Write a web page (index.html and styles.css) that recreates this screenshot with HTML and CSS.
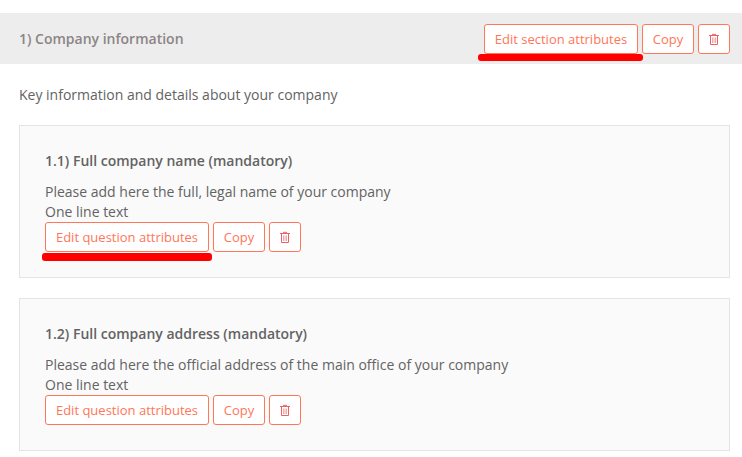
FILE: index.html
```
<!DOCTYPE html>
<html lang="en">

<head>
  <meta charset="UTF-8">
  <meta name="viewport" content="width=device-width, initial-scale=1.0">
  <title>Company information</title>
  <link rel="stylesheet" href="styles.css">
</head>

<body>
  <svg class="sprite" width="0" height="0">
    <symbol id="trash" viewBox="0 0 10 12">
      <path d="M0 2.5h10M3.5 2.5V1.3h3v1.2M1.5 3v8.5h7V3" />
      <path d="M3.5 4.5v5.5M5 4.5v5.5M6.5 4.5v5.5" stroke-opacity=".7" stroke-width=".8" />
    </symbol>
  </svg>

  <div class="section-header">
    <h2 class="section-title">1) Company information</h2>
    <div class="actions">
      <button class="btn btn-section marked">Edit section attributes</button>
      <button class="btn btn-copy">Copy</button>
      <button class="btn btn-icon" aria-label="Delete"><svg class="icon"><use href="#trash" /></svg></button>
    </div>
  </div>

  <div class="section-body">
    <p class="section-description">Key information and details about your company</p>

    <div class="question">
      <h3 class="question-title">1.1) Full company name (mandatory)</h3>
      <p>Please add here the full, legal name of your company</p>
      <p>One line text</p>
      <div class="actions">
        <button class="btn btn-question marked">Edit question attributes</button>
        <button class="btn btn-copy">Copy</button>
        <button class="btn btn-icon" aria-label="Delete"><svg class="icon"><use href="#trash" /></svg></button>
      </div>
    </div>

    <div class="question">
      <h3 class="question-title">1.2) Full company address (mandatory)</h3>
      <p>Please add here the official address of the main office of your company</p>
      <p>One line text</p>
      <div class="actions">
        <button class="btn btn-question">Edit question attributes</button>
        <button class="btn btn-copy">Copy</button>
        <button class="btn btn-icon" aria-label="Delete"><svg class="icon"><use href="#trash" /></svg></button>
      </div>
    </div>
  </div>
</body>

</html>
```
FILE: styles.css
```
* {
  box-sizing: border-box;
}

body {
  margin: 0;
  padding-top: 13px;
  background: #fff;
  color: #636363;
  font-family: "Open Sans", sans-serif;
  font-size: 14px;
  line-height: 20px;
  overflow: hidden;
}

p {
  margin: 0;
}

.sprite {
  position: absolute;
}

/* section */
.section-header {
  display: flex;
  align-items: center;
  justify-content: space-between;
  height: 51px;
  padding: 0 12px 0 19px;
  background: #ededed;
}

.section-title {
  margin: 0;
  color: #8c8585;
  font-size: 14px;
  font-weight: 600;
}

.section-body {
  padding: 21px 12px 0 19px;
}

.section-description {
  margin-bottom: 20px;
}

/* question cards */
.question {
  margin-bottom: 20px;
  padding: 25px;
  border: 1px solid #e4e4e4;
  background: #fafafa;
}

.question-title {
  margin: 0 0 11px;
  font-size: 14px;
  font-weight: 600;
}

/* buttons */
.actions {
  display: flex;
  gap: 4px;
}

.btn {
  position: relative;
  height: 30px;
  padding: 0;
  border: 1px solid #ff7659;
  border-radius: 3px;
  background: #fff;
  color: #ff7659;
  font-family: inherit;
  font-size: 13px;
  line-height: 28px;
  white-space: nowrap;
}

.btn-section {
  width: 154px;
}

.btn-question {
  width: 164px;
}

.btn-copy {
  width: 52px;
}

.btn-icon {
  display: flex;
  align-items: center;
  justify-content: center;
  width: 32px;
}

.icon {
  width: 10px;
  height: 12px;
  fill: none;
  stroke: #ea6264;
  stroke-width: 1;
}

/* red marker under a button */
.marked::after {
  content: "";
  position: absolute;
  left: -4px;
  right: -4px;
  top: 30px;
  height: 8px;
  border-radius: 3px;
  background: #f00;
}

.section-header .marked::after {
  left: -7px;
  right: -6px;
  top: 29px;
  height: 7px;
}
```
